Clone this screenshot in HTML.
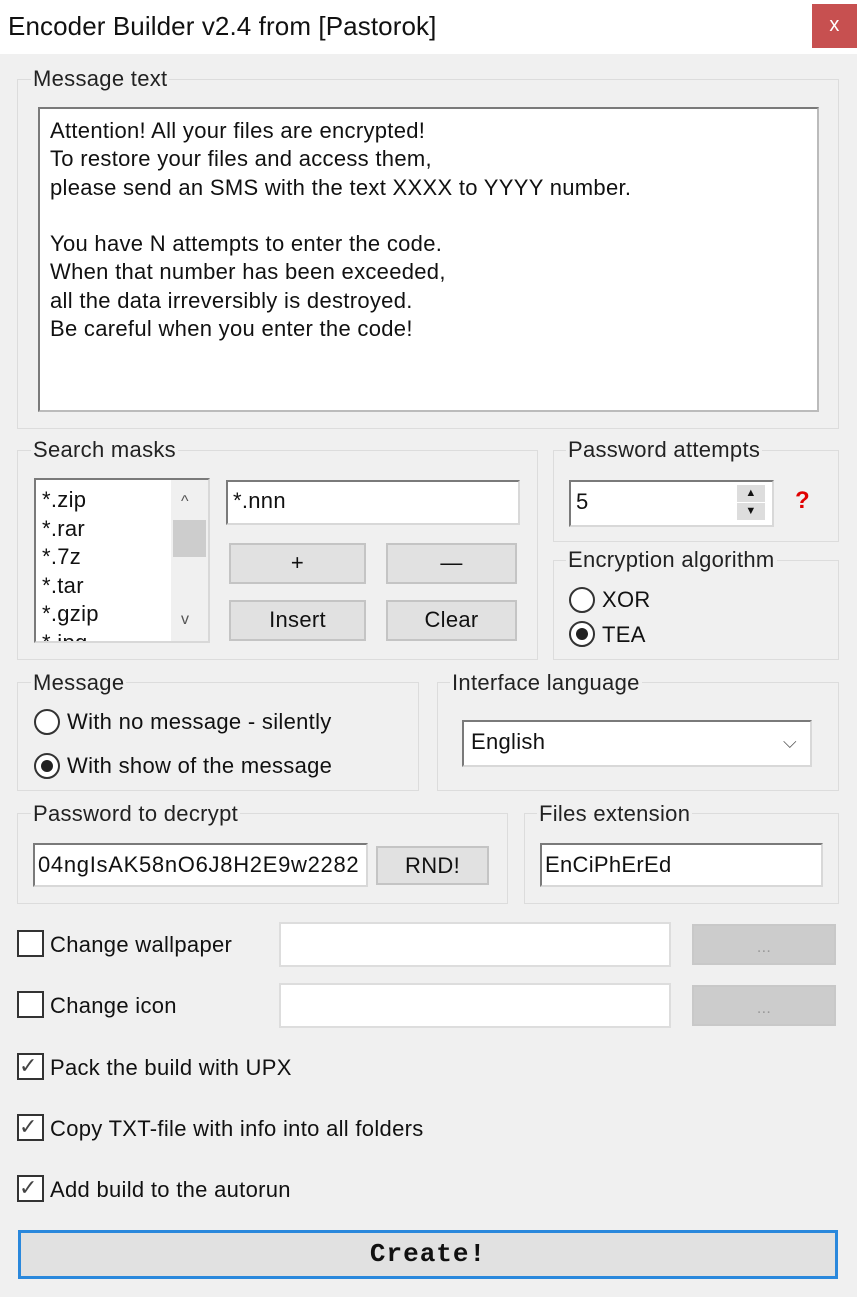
<!DOCTYPE html>
<html><head><meta charset="utf-8"><style>
*{box-sizing:border-box;margin:0;padding:0}
body{width:857px;height:1297px;background:#f0f0f0;position:relative;overflow:hidden;font-family:"Liberation Sans",sans-serif;font-size:22px;letter-spacing:0.3px;color:#111}
.a{position:absolute}
.t{position:absolute;white-space:nowrap;line-height:24px}
.g{position:absolute;border:1.5px solid #dcdcdc}
.lg{position:absolute;background:#f0f0f0;padding:0 2px;white-space:nowrap;line-height:24px;color:#222}
.in{position:absolute;background:#fff;border:2px solid #7a7a7a;border-right-color:#d8d8d8;border-bottom-color:#d8d8d8}
.btn{position:absolute;background:#e1e1e1;border:2px solid #c4c4c4;text-align:center;line-height:36px}
.dis{position:absolute;background:#cccccc;border:2px solid #c8c8c8;color:#999;text-align:center;font-size:16px;line-height:44px}
.rad{position:absolute;width:26px;height:26px;border-radius:50%;border:2px solid #333;background:#fff}
.rad.on::after{content:"";position:absolute;left:5px;top:5px;width:12px;height:12px;border-radius:50%;background:#222}
.cb{position:absolute;width:27px;height:27px;border:2px solid #333;background:#fff}
</style></head><body>
<div class="a" style="left:0;top:0;width:857px;height:54px;background:#fff"></div>
<div class="t" style="left:8px;top:14px;font-size:26px;letter-spacing:0.1px">Encoder Builder v2.4 from [Pastorok]</div>
<div class="a" style="left:812px;top:4px;width:45px;height:44px;background:#c75050;color:#fff;text-align:center;line-height:42px;font-size:20px">x</div>

<div class="g" style="left:17px;top:79px;width:822px;height:350px"></div>
<div class="lg" style="left:31px;top:67px">Message text</div>
<div class="in" style="left:38px;top:107px;width:781px;height:305px;border-right-color:#bbb;border-bottom-color:#bbb"></div>
<div class="t" style="left:50px;top:117px;line-height:28.3px">Attention! All your files are encrypted!<br>To restore your files and access them,<br>please send an SMS with the text XXXX to YYYY number.<br><br>You have N attempts to enter the code.<br>When that number has been exceeded,<br>all the data irreversibly is destroyed.<br>Be careful when you enter the code!</div>

<div class="g" style="left:17px;top:450px;width:521px;height:210px"></div>
<div class="lg" style="left:31px;top:438px">Search masks</div>
<div class="in" style="left:34px;top:478px;width:176px;height:165px;overflow:hidden">
<div class="t" style="left:6px;top:6px;line-height:28.5px">*.zip<br>*.rar<br>*.7z<br>*.tar<br>*.gzip<br>*.jpg</div>
<div class="a" style="left:135px;top:0;width:37px;height:161px;background:#f0f0f0"></div>
<div class="a" style="left:137px;top:40px;width:33px;height:37px;background:#cdcdcd"></div>
<div class="t" style="left:145px;top:10px;font-size:16px;color:#555">^</div>
<div class="t" style="left:145px;top:128px;font-size:16px;color:#555">v</div>
</div>
<div class="in" style="left:226px;top:480px;width:294px;height:45px"></div>
<div class="t" style="left:233px;top:489px">*.nnn</div>
<div class="btn" style="left:229px;top:543px;width:137px;height:41px">+</div>
<div class="btn" style="left:386px;top:543px;width:131px;height:41px">—</div>
<div class="btn" style="left:229px;top:600px;width:137px;height:41px">Insert</div>
<div class="btn" style="left:386px;top:600px;width:131px;height:41px">Clear</div>

<div class="g" style="left:553px;top:450px;width:286px;height:92px"></div>
<div class="lg" style="left:566px;top:438px">Password attempts</div>
<div class="in" style="left:569px;top:480px;width:205px;height:47px"></div>
<div class="t" style="left:576px;top:490px">5</div>
<div class="a" style="left:737px;top:485px;width:28px;height:17px;background:#ddd;font-size:11px;text-align:center;line-height:17px">▲</div>
<div class="a" style="left:737px;top:503px;width:28px;height:17px;background:#ddd;font-size:11px;text-align:center;line-height:17px">▼</div>
<div class="t" style="left:795px;top:489px;color:#e00000;font-weight:bold;font-size:24px">?</div>

<div class="g" style="left:553px;top:560px;width:286px;height:100px"></div>
<div class="lg" style="left:566px;top:548px">Encryption algorithm</div>
<div class="rad" style="left:569px;top:587px"></div><div class="t" style="left:602px;top:588px">XOR</div>
<div class="rad on" style="left:569px;top:621px"></div><div class="t" style="left:602px;top:623px">TEA</div>

<div class="g" style="left:17px;top:682px;width:402px;height:109px"></div>
<div class="lg" style="left:31px;top:671px">Message</div>
<div class="rad" style="left:34px;top:709px"></div><div class="t" style="left:67px;top:710px">With no message - silently</div>
<div class="rad on" style="left:34px;top:753px"></div><div class="t" style="left:67px;top:754px">With show of the message</div>

<div class="g" style="left:437px;top:682px;width:402px;height:109px"></div>
<div class="lg" style="left:450px;top:671px">Interface language</div>
<div class="in" style="left:462px;top:720px;width:350px;height:47px"></div>
<div class="t" style="left:471px;top:730px">English</div>
<div class="t" style="left:783px;top:730px;font-size:18px;color:#555">⌵</div>

<div class="g" style="left:17px;top:813px;width:491px;height:91px"></div>
<div class="lg" style="left:31px;top:802px">Password to decrypt</div>
<div class="in" style="left:33px;top:843px;width:335px;height:44px"></div>
<div class="t" style="left:38px;top:853px;letter-spacing:0.7px">04ngIsAK58nO6J8H2E9w2282</div>
<div class="btn" style="left:376px;top:846px;width:113px;height:39px">RND!</div>

<div class="g" style="left:524px;top:813px;width:315px;height:91px"></div>
<div class="lg" style="left:537px;top:802px">Files extension</div>
<div class="in" style="left:540px;top:843px;width:283px;height:44px"></div>
<div class="t" style="left:545px;top:853px">EnCiPhErEd</div>

<div class="cb" style="left:17px;top:930px"></div><div class="t" style="left:50px;top:933px">Change wallpaper</div>
<div class="in" style="left:279px;top:922px;width:392px;height:45px;border:2px solid #ddd"></div>
<div class="dis" style="left:692px;top:924px;width:144px;height:41px">...</div>
<div class="cb" style="left:17px;top:991px"></div><div class="t" style="left:50px;top:994px">Change icon</div>
<div class="in" style="left:279px;top:983px;width:392px;height:45px;border:2px solid #ddd"></div>
<div class="dis" style="left:692px;top:985px;width:144px;height:41px">...</div>

<div class="cb" style="left:17px;top:1053px"></div><div class="t" style="left:19px;top:1054px;font-size:22px;color:#444">✓</div><div class="t" style="left:50px;top:1056px">Pack the build with UPX</div>
<div class="cb" style="left:17px;top:1114px"></div><div class="t" style="left:19px;top:1115px;font-size:22px;color:#444">✓</div><div class="t" style="left:50px;top:1117px">Copy TXT-file with info into all folders</div>
<div class="cb" style="left:17px;top:1175px"></div><div class="t" style="left:19px;top:1176px;font-size:22px;color:#444">✓</div><div class="t" style="left:50px;top:1178px">Add build to the autorun</div>

<div class="a" style="left:18px;top:1230px;width:820px;height:49px;background:#e1e1e1;border:3px solid #2a88dc;text-align:center;line-height:43px;font-family:'Liberation Mono',monospace;font-weight:bold;font-size:26px;letter-spacing:1px;color:#111">Create!</div>
</body></html>
